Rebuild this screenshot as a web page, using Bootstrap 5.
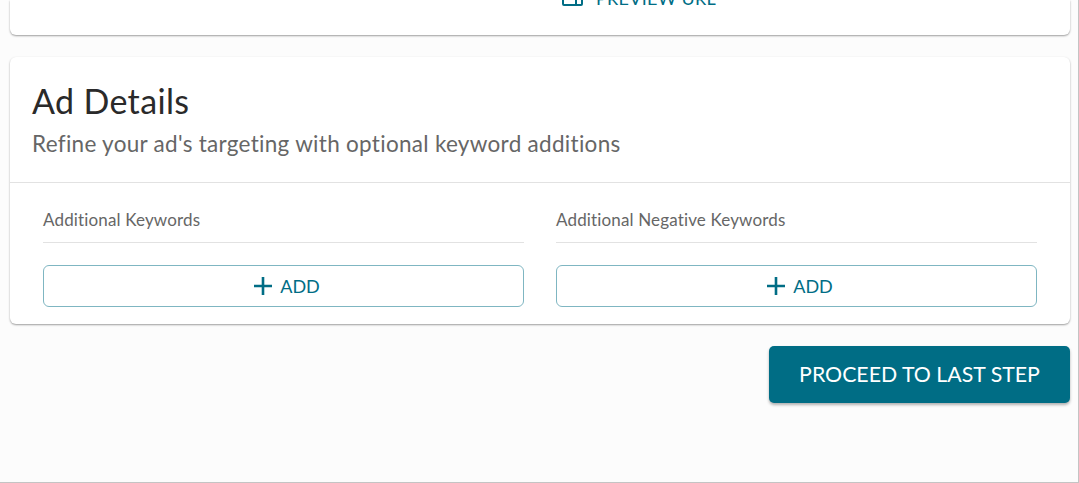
<!DOCTYPE html>
<html lang="en">
<head>
<meta charset="utf-8">
<title>Ad Details</title>
<link rel="stylesheet" href="https://cdn.jsdelivr.net/npm/bootstrap@5.3.0/dist/css/bootstrap.min.css">
<style>
html,body{height:100%;margin:0;overflow:hidden}
body{background:#fff;font-family:"Lato","Noto Sans",sans-serif}
.shell{width:1079px;height:483px;background:#fcfcfc;border-right:1px solid #c4c4c4;border-bottom:1px solid #c4c4c4;padding:0 8px 0 10px;overflow:hidden}
.panel{background:#fff;border:0;border-radius:6px;box-shadow:0 1px 2px rgba(0,0,0,.38)}
.panel-top{height:35px;border-radius:0 0 6px 6px;margin-bottom:22px;overflow:hidden;justify-content:center;align-items:flex-end;padding-bottom:27px}
.preview{color:#006d85;font-size:18px;line-height:20px;letter-spacing:.3px;gap:13px;margin-left:198px}
.panel-head{padding:24px 22px 23px;border-bottom:1px solid #e2e2e2}
.ad-title{font-size:34px;line-height:40px;color:#2a2a2a;margin:0 0 8px;font-weight:400;letter-spacing:.35px}
.ad-sub{font-size:22.5px;line-height:30px;color:#666;margin:0;letter-spacing:.29px}
.panel-body-x{padding:26px 33px 17px;column-gap:32px}
.kw-label{font-size:17px;line-height:22px;color:#666;padding-bottom:11px;border-bottom:1px solid #e2e2e2;margin-bottom:22px;letter-spacing:.15px}
.add-btn{height:42px;border:1px solid #7fb6c2;color:#006d85;background:#fff;border-radius:6px;font-size:18px;gap:7px;padding:0 0 0 6px}
.add-btn:hover{color:#006d85;background:#fff;border-color:#7fb6c2}
.go-btn{width:301px;height:57px;margin-top:22px;background:#006d85;color:#fff;border:0;border-radius:5px;font-size:21.3px;box-shadow:0 2px 3px rgba(0,0,0,.3);padding:0}
.go-btn:hover{background:#006d85;color:#fff}
</style>
</head>
<body>
<div class="shell">
  <div class="panel panel-top d-flex">
    <span class="preview d-inline-flex align-items-center">
      <svg width="21" height="20" viewBox="0 0 21 20" fill="none" stroke="#006d85" stroke-width="2"><rect x="1" y="1" width="19" height="16" rx="1"/><path d="M1 6h19M14 6v11"/></svg>
      PREVIEW URL
    </span>
  </div>
  <div class="panel">
    <div class="panel-head">
      <h2 class="ad-title">Ad Details</h2>
      <p class="ad-sub">Refine your ad's targeting with optional keyword additions</p>
    </div>
    <div class="panel-body-x d-flex">
      <div class="flex-fill w-50">
        <div class="kw-label">Additional Keywords</div>
        <button type="button" class="btn add-btn w-100 d-flex align-items-center justify-content-center">
          <svg width="20" height="20" viewBox="0 0 20 20" stroke="#006d85" stroke-width="2.6"><path d="M10 1v18M1 10h18"/></svg>ADD
        </button>
      </div>
      <div class="flex-fill w-50">
        <div class="kw-label">Additional Negative Keywords</div>
        <button type="button" class="btn add-btn w-100 d-flex align-items-center justify-content-center">
          <svg width="20" height="20" viewBox="0 0 20 20" stroke="#006d85" stroke-width="2.6"><path d="M10 1v18M1 10h18"/></svg>ADD
        </button>
      </div>
    </div>
  </div>
  <div class="d-flex justify-content-end">
    <button type="button" class="btn go-btn">PROCEED TO LAST STEP</button>
  </div>
</div>
<script src="https://cdn.jsdelivr.net/npm/bootstrap@5.3.0/dist/js/bootstrap.bundle.min.js"></script>
</body>
</html>
